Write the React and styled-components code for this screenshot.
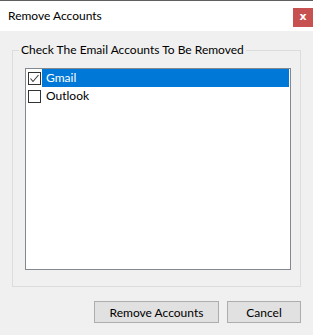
import styled, { createGlobalStyle } from "styled-components";

const Global = createGlobalStyle`
  html, body {
    margin: 0;
    padding: 0;
    background: #f0f0f0;
  }
  * {
    box-sizing: border-box;
  }
`;

const accounts = [
  { name: "Gmail", checked: true, selected: true },
  { name: "Outlook", checked: false, selected: false },
];

export default function App() {
  return (
    <>
      <Global />
      <Window>
        <TitleBar>
          <Title>Remove Accounts</Title>
          <CloseButton>x</CloseButton>
        </TitleBar>
        <Body>
          <Group>
            <Legend>Check The Email Accounts To Be Removed</Legend>
            <List>
              {accounts.map((a) => (
                <Row key={a.name}>
                  <Box>
                    {a.checked && (
                      <svg width="11" height="11" viewBox="0 0 11 11">
                        <polyline
                          points="1.5,5.5 4,8.5 9.5,2"
                          fill="none"
                          stroke="#3c3c3c"
                          strokeWidth="1.1"
                        />
                      </svg>
                    )}
                  </Box>
                  <Label $selected={a.selected}>{a.name}</Label>
                </Row>
              ))}
            </List>
          </Group>
          <Buttons>
            <Button $w={125}>Remove Accounts</Button>
            <Button $w={74}>Cancel</Button>
          </Buttons>
        </Body>
      </Window>
    </>
  );
}

const Window = styled.div`
  width: 313px;
  height: 335px;
  display: flex;
  flex-direction: column;
  background: #f0f0f0;
  border-top: 1px solid #5f5f5f;
  font-family: Lato, "Noto Sans", sans-serif;
  font-size: 12px;
  color: #000;
`;

const TitleBar = styled.div`
  height: 30px;
  background: #fff;
  display: flex;
  align-items: flex-start;
  justify-content: space-between;
  padding-left: 8px;
`;

const Title = styled.div`
  margin-top: 6px;
  line-height: 17px;
  font-size: 12px;
`;

const CloseButton = styled.div`
  margin-top: 7px;
  width: 20px;
  height: 19px;
  background: #c75050;
  color: #fff;
  font-weight: bold;
  font-size: 11px;
  line-height: 17px;
  text-align: center;
  font-family: "DejaVu Sans", sans-serif;
`;

const Body = styled.div`
  flex: 1;
  display: flex;
  flex-direction: column;
`;

const Group = styled.fieldset`
  margin: 11px 12px 0 12px;
  padding: 0 0 16px 0;
  border: 1px solid #dcdcdc;
  min-width: 0;
`;

const Legend = styled.legend`
  margin-left: 6px;
  padding: 0 2px;
  line-height: 16px;
  font-size: 12px;
`;

const List = styled.div`
  margin: 10px 9px 0 12px;
  height: 202px;
  background: #fff;
  border: 1px solid #828790;
  display: flex;
  flex-direction: column;
`;

const Row = styled.div`
  height: 18px;
  display: flex;
  align-items: center;
  padding: 0 1px 0 2px;
`;

const Box = styled.div`
  width: 13px;
  height: 13px;
  border: 1px solid #333;
  background: #fff;
  display: flex;
  align-items: center;
  justify-content: center;
  flex-shrink: 0;
`;

const Label = styled.div`
  margin-left: 1px;
  flex: 1;
  height: 18px;
  line-height: 18px;
  padding-left: 4px;
  background: ${(p) => (p.$selected ? "#0078d7" : "transparent")};
  color: ${(p) => (p.$selected ? "#fff" : "#000")};
`;

const Buttons = styled.div`
  display: flex;
  justify-content: flex-end;
  gap: 8px;
  margin: 14px 12px 0 0;
`;

const Button = styled.button`
  width: ${(p) => p.$w}px;
  height: 22px;
  padding: 0;
  background: #e1e1e1;
  border: 1px solid #adadad;
  font-family: inherit;
  font-size: 12px;
  color: #000;
`;
